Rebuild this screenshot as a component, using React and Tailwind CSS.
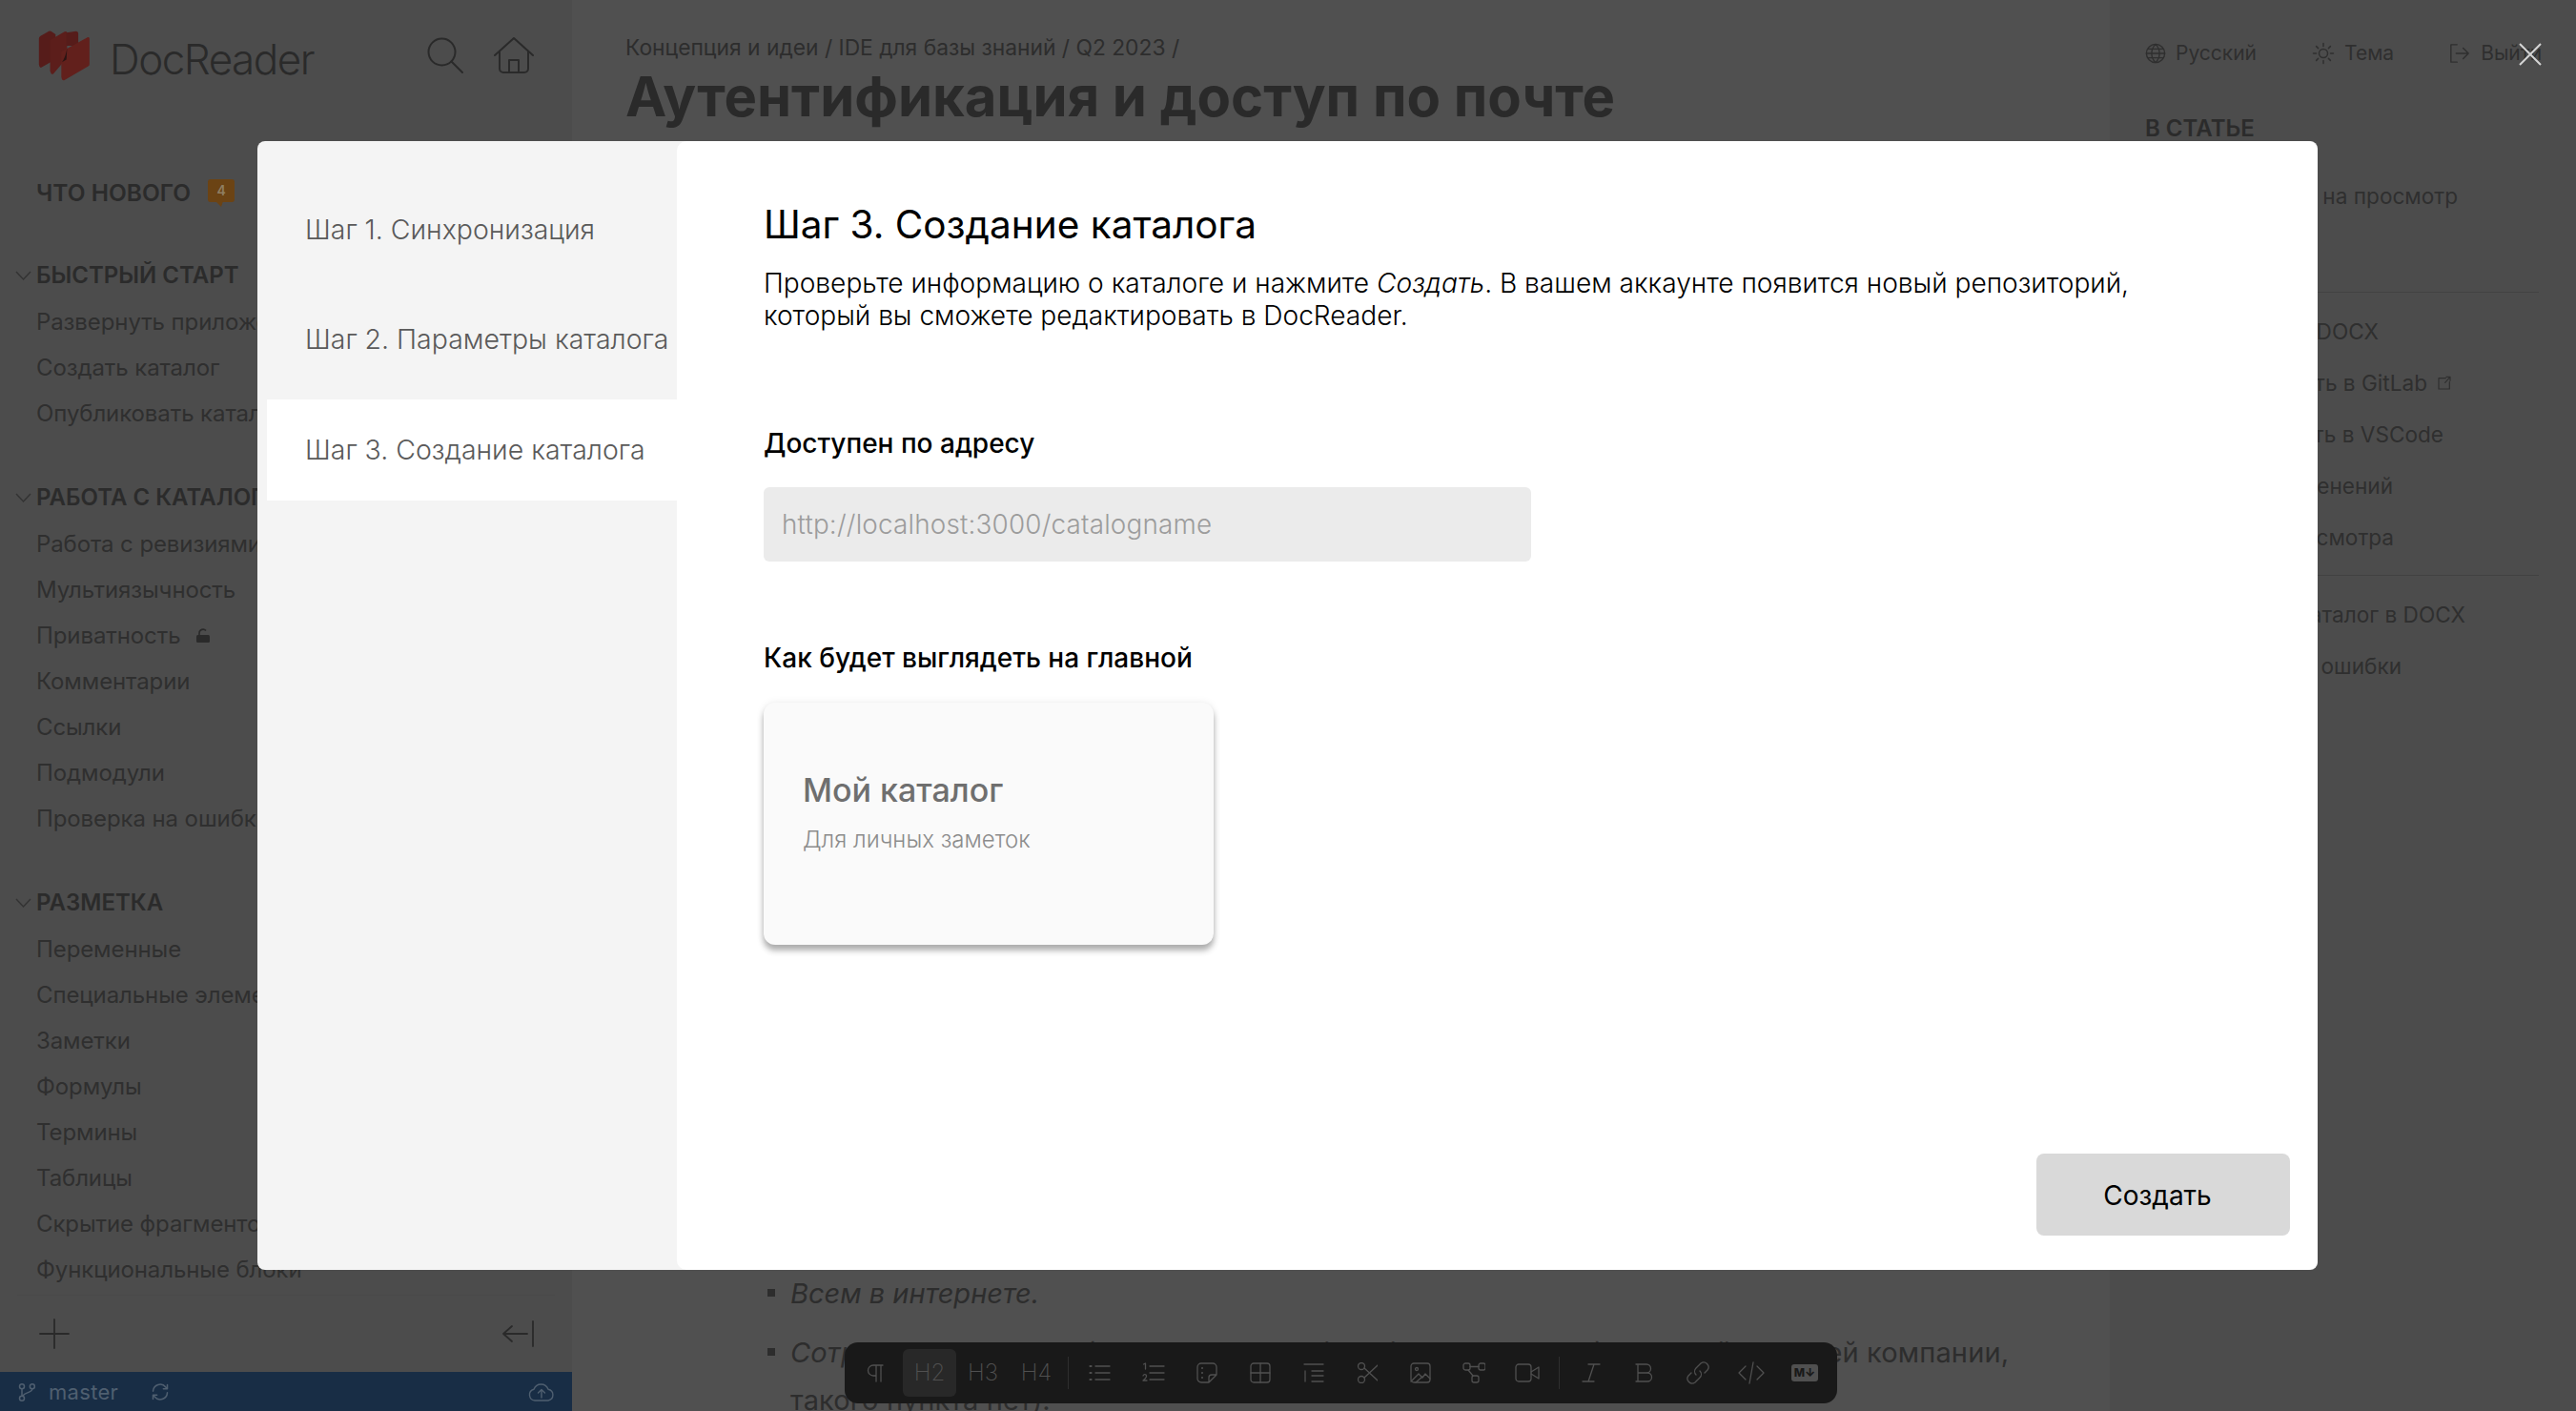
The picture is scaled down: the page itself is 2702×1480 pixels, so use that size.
import React from 'react';

const quickStart = ['Развернуть приложение', 'Создать каталог', 'Опубликовать каталог'];
const catalogWork = ['Работа с ревизиями', 'Мультиязычность', 'Приватность', 'Комментарии', 'Ссылки', 'Подмодули', 'Проверка на ошибки'];
const markup = ['Переменные', 'Специальные элементы', 'Заметки', 'Формулы', 'Термины', 'Таблицы', 'Скрытие фрагментов', 'Функциональные блоки'];

const Icon = ({ size = 24, w, h, view = '0 0 24 24', width = 1.3, className = '', children }) => (
    <svg width={w || size} height={h || size} viewBox={view} fill="none" stroke="currentColor" strokeWidth={width} strokeLinecap="round" strokeLinejoin="round" className={`shrink-0 ${className}`}>
        {children}
    </svg>
);

const NavSection = ({ title, items, className = '' }) => (
    <div className={className}>
        <div className="relative h-[30px] pl-[38px] text-[24px] leading-[30px] font-semibold text-[#2b2b2b] whitespace-nowrap">
            <svg className="absolute left-[16px] top-[10px]" width="17" height="11" viewBox="0 0 17 11" fill="none" stroke="#333" strokeWidth="1.4"><path d="M1 1l7.500 8 7.500-8" /></svg>
            {title}
        </div>
        <ul className="mt-[20px] flex flex-col">
            {items.map((item) => (
                <li key={item} className="h-[48px] pl-[38px] text-[24px] leading-[28px] tracking-[-0.1px] text-[#2f2f2f] whitespace-nowrap flex items-start gap-[16px]">
                    {item}
                    {item === 'Приватность' && <svg className="mt-[6px]" width="16" height="16" viewBox="0 0 16 16" fill="#2a2a2a"><rect x="1" y="7" width="14" height="8" rx="1.500" /><path d="M4 7V5a4 4 0 017-2.500" fill="none" stroke="#2a2a2a" strokeWidth="1.600" /></svg>}
                </li>
            ))}
        </ul>
    </div>
);

const Logo = () => (
    <svg width="54" height="53" viewBox="0 0 160 158" className="shrink-0">
        <path d="M2 25q0-5 5-8l26-15q5-2 9 2l12 8v78L8 116q-6-3-6-10z" fill="#561c1a" />
        <path d="M37 30L82 4q6-3 8 3v78L47 136q-5 2-7-2l-3-8z" fill="#5c1e1b" />
        <path d="M88 7l30-5q6 0 7 6v40H88z" fill="#561c1a" />
        <path d="M72 66l83-45q5-2 5 4v80q0 5-4 7L82 155q-6 3-8-3l-2-7z" fill="#62201c" />
        <path d="M90 55q-5 30-16 44l14-8z" fill="#2a1413" />
    </svg>
);

const Sidebar = () => (
    <aside className="w-[600px] h-full shrink-0 flex flex-col bg-[#4c4c4c]">
        <div className="h-[116px] shrink-0 flex items-start pl-[40px] pt-[32px] text-[#2a2a2a]">
            <Logo />
            <span className="ml-[21px] mt-[4px] text-[44px] leading-[52px] font-light tracking-[-1.500px] text-[#2a2a2a]">DocReader</span>
            <Icon size={38} view="0 0 38 38" width={2} className="ml-[119px] mt-[7px]"><circle cx="15.500" cy="15.500" r="14" /><path d="M25.500 25.500L37 37" /></Icon>
            <Icon w={42} h={38} view="0 0 42 38" width={2} className="ml-[32px] mt-[7px]"><path d="M1 19L21 1l20 18" /><path d="M6 15v18a4 4 0 004 4h22a4 4 0 004-4V15" /><path d="M16 37V24h10v13" /></Icon>
        </div>
        <div className="mt-[71px] h-[30px] shrink-0 pl-[38px] flex items-center gap-[18px] text-[24.500px] font-semibold text-[#2b2b2b]">
            ЧТО НОВОГО
            <span className="relative w-[28px] h-[24px] -translate-y-[2px] rounded-[3px] bg-[#6b4314] text-[14px] leading-[24px] text-center font-semibold text-[#8f7e62]">
                4
                <i className="absolute left-[8px] top-[23px] border-t-[6px] border-l-[6px] border-r-[2px] border-t-[#6b4314] border-l-transparent border-r-transparent" />
            </span>
        </div>
        <div className="flex-1 min-h-0 mt-[57px] overflow-hidden">
            <NavSection title="БЫСТРЫЙ СТАРТ" items={quickStart} />
            <NavSection title="РАБОТА С КАТАЛОГОМ" items={catalogWork} className="mt-[39px]" />
            <NavSection title="РАЗМЕТКА" items={markup} className="mt-[39px]" />
        </div>
        <div className="h-[81px] shrink-0 mx-[18px] border-t border-[#494949] flex items-center justify-between pl-[23px] pr-[22px] text-[#2a2a2a]">
            <Icon size={32} view="0 0 32 32" width={1.8}><path d="M16 1v30M1 16h30" /></Icon>
            <Icon w={34} h={28} view="0 0 34 28" width={1.8}><path d="M33 1v26M27 14H2M11 6l-9 8 9 8" /></Icon>
        </div>
        <div className="h-[41px] shrink-0 flex items-center bg-[#182d45] pl-[18px] pr-[18px] text-[#4f5f70]">
            <Icon size={20} width={1.800}><circle cx="6" cy="5" r="3" /><circle cx="6" cy="20" r="3" /><circle cx="19" cy="5" r="3" /><path d="M6 8v9M19 8c0 5-9 4-12 9" /></Icon>
            <span className="ml-[13px] text-[22px] leading-[26px] tracking-[0.3px]">master</span>
            <Icon size={20} width={1.800} className="ml-[34px]"><path d="M3 11a9 9 0 0 1 16-5l2 2M21 3v5h-5M21 13a9 9 0 0 1-16 5l-2-2M3 21v-5h5" /></Icon>
            <Icon w={28} h={20} view="0 0 28 20" width={1.400} className="ml-auto"><path d="M7 19a6 6 0 0 1-1-11.800 8 8 0 0 1 15 0A6 6 0 0 1 21 19zM14 16V8M10.500 11L14 7.500l3.500 3.500" /></Icon>
        </div>
    </aside>
);

const Article = () => (
    <main className="flex-1 min-w-0 bg-[#505050] pl-[56px] pt-[35px]">
        <div className="text-[22.800px] leading-[30px] text-[#2d2d2d] whitespace-nowrap">Концепция и идеи / IDE для базы знаний / Q2 2023 /</div>
        <h1 className="mt-[2px] text-[58px] leading-[68px] font-bold text-[#2a2a2a] whitespace-nowrap">Аутентификация и доступ по почте</h1>
        <ul className="mt-[1197px] ml-[173px] text-[29px] leading-[50px] text-[#2d2d2d]">
            <li className="relative italic mb-[12px]">
                <i className="absolute left-[-24px] top-[20px] w-[8px] h-[8px] bg-[#2d2d2d]" />
                Всем в интернете.
            </li>
            <li className="relative whitespace-nowrap tracking-[0.14px]">
                <i className="absolute left-[-24px] top-[20px] w-[8px] h-[8px] bg-[#2d2d2d]" />
                <em>Сотрудникам</em> ISO ИТ (через домен Active Directory или BD) и партнёрам всей компании,<br />такого пункта нет).
            </li>
        </ul>
    </main>
);

const tocRows = [
    { text: 'Отправить на просмотр', pad: 'pr-[85px]', top: 'mt-[41px]' },
    { text: 'Скачать DOCX', pad: 'pr-[168px]', top: 'mt-[112px]' },
    { text: 'Редактировать в GitLab', pad: 'pr-[91px]', link: true, top: 'mt-[24px]' },
    { text: 'Редактировать в VSCode', pad: 'pr-[100px]', top: 'mt-[24px]' },
    { text: 'История изменений', pad: 'pr-[153px]', top: 'mt-[24px]' },
    { text: 'Ссылка для просмотра', pad: 'pr-[152px]', top: 'mt-[24px]' },
    { text: 'Скачать каталог в DOCX', pad: 'pr-[77px]', top: 'mt-[51px]' },
    { text: 'Найти ошибки', pad: 'pr-[144px]', top: 'mt-[24px]' },
];

const RightColumn = () => (
    <aside className="relative w-[489px] h-full shrink-0 bg-[#4c4c4c] pl-[37px] pt-[42px] text-[#2f2f2f]">
        <div className="flex items-center text-[21px] leading-[28px] whitespace-nowrap">
            <Icon size={22} width={1.500}><circle cx="12" cy="12" r="10.500" /><path d="M1.500 12h21M12 1.500c-6 6-6 15 0 21M12 1.500c6 6 6 15 0 21M3 7h18M3 17h18" /></Icon>
            <span className="ml-[10px]">Русский</span>
            <Icon size={24} width={1.500} className="ml-[58px]"><circle cx="12" cy="12" r="4.500" /><path d="M12 1.500v3M12 19.500v3M1.500 12h3M19.500 12h3M4.600 4.600l2 2M17.400 17.400l2 2M4.600 19.400l2-2M17.400 6.600l2-2" /></Icon>
            <span className="ml-[10px]">Тема</span>
            <Icon size={22} width={1.500} className="ml-[58px]"><path d="M9 2H2v20h7M8 12h14M16 6l6 6-6 6" /></Icon>
            <span className="ml-[11px]">Выйти</span>
        </div>
        <div className="mt-[50px] text-[24px] leading-[30px] font-semibold text-[#2b2b2b]">В СТАТЬЕ</div>
        <div className="w-[413px] flex flex-col">
            {tocRows.map((row) => (
                <div key={row.text} className={`${row.top} ${row.pad} h-[30px] text-[22.600px] leading-[30px] whitespace-nowrap flex items-center justify-end gap-[10px]`}>
                    {row.text}
                    {row.link && <Icon size={16} width={1.800}><path d="M14 4H3v17h17V10M13 11l8-9M15 2h6v6" /></Icon>}
                </div>
            ))}
        </div>
        <div className="absolute left-[37px] w-[413px] top-[306px] h-px bg-[#424242]" />
        <div className="absolute left-[37px] w-[413px] top-[603px] h-px bg-[#424242]" />
    </aside>
);

const Wizard = () => (
    <div className="absolute left-[270px] top-[148px] w-[2161px] h-[1184px] rounded-[8px] bg-[#f4f4f4] flex overflow-hidden">
        <nav className="w-[440px] shrink-0 pl-[10px] pt-[40px] text-[28.450px] font-light text-[#5a5a5a] flex flex-col gap-[9.500px]">
            {['Шаг 1. Синхронизация', 'Шаг 2. Параметры каталога', 'Шаг 3. Создание каталога'].map((step, i) => (
                <div key={step} className={`h-[106px] flex items-center pl-[40px] whitespace-nowrap ${i === 2 ? 'bg-white' : ''}`}>{step}</div>
            ))}
        </nav>
        <section className="flex-1 min-w-0 bg-white rounded-[10px] flex flex-col pl-[91px] pr-[29px] pt-[64px] pb-[36px]">
            <h2 className="text-[40.500px] leading-[48px] font-normal text-black whitespace-nowrap">Шаг 3. Создание каталога</h2>
            <p className="mt-[20px] w-[1480px] text-[28.100px] leading-[34px] font-light text-black">
                Проверьте информацию о каталоге и нажмите <em>Создать</em>. В вашем аккаунте появится новый репозиторий, который вы сможете редактировать в DocReader.
            </p>
            <label className="mt-[100px] text-[28px] leading-[34px] font-[450] text-black">Доступен по адресу</label>
            <div className="mt-[29px] w-[805px] h-[78px] rounded-[6px] bg-[#ebebeb] pl-[19px] pt-[2px] flex items-center text-[27.800px] font-light text-[#9c9c9c] tracking-[0.2px]">http://localhost:3000/catalogname</div>
            <label className="mt-[84px] text-[28px] leading-[34px] font-[450] text-black">Как будет выглядеть на главной</label>
            <div className="mt-[30px] w-[472px] h-[254px] rounded-[12px] bg-[#fafafa] pl-[41px] pb-[24px] flex flex-col justify-center shadow-[0_6px_6px_rgba(0,0,0,0.3),0_0_8px_rgba(0,0,0,0.08)]">
                <div className="text-[34px] leading-[42px] font-[450] text-[#6f6f6f]">Мой каталог</div>
                <div className="mt-[16px] text-[24px] leading-[30px] font-light text-[#8c8c8c]">Для личных заметок</div>
            </div>
            <div className="mt-auto flex justify-end">
                <button className="w-[266px] h-[86px] pr-[12px] pt-[2px] rounded-[8px] bg-[#d9d9d9] text-[28px] text-black">Создать</button>
            </div>
        </section>
    </div>
);

const ToolSlot = ({ children, className = '' }) => (
    <span className={`w-[56px] shrink-0 flex items-center justify-center ${className}`}>{children}</span>
);

const Toolbar = () => (
    <div className="absolute left-[886px] top-[1408px] w-[1041px] h-[64px] rounded-[14px] bg-[#191919] flex items-center pl-[5px] text-[#505050]">
        <ToolSlot><Icon size={20} view="0 0 20 20"><path d="M17 2H7a5 5 0 000 11h3M10 2v17M15 2v17" /></Icon></ToolSlot>
        <ToolSlot className="h-[50px] rounded-[6px] bg-[#282828] text-[24px] font-extralight">H2</ToolSlot>
        <ToolSlot className="text-[24px] font-extralight">H3</ToolSlot>
        <ToolSlot className="text-[24px] font-extralight">H4</ToolSlot>
        <i className="mx-[5px] w-px h-[34px] bg-[#2e2e2e]" />
        <ToolSlot><Icon view="0 0 24 24"><path d="M7 5h15M7 12h15M7 19h15" /><path d="M1.500 5h1M1.500 12h1M1.500 19h1" strokeWidth="2.200" /></Icon></ToolSlot>
        <ToolSlot><Icon view="0 0 24 24"><path d="M8 5h15M8 12h15M8 19h15M1.500 3l2-1v6M1 15q1-2 3-1 2 2-3 6h4" /></Icon></ToolSlot>
        <ToolSlot><Icon size={22} view="0 0 22 22"><path d="M13 21H5a4 4 0 01-4-4V5a4 4 0 014-4h12a4 4 0 014 4v8zM13 21v-5a3 3 0 013-3h5" /><path d="M6 6v0M6 11v0M6 16v0" strokeWidth="2" /></Icon></ToolSlot>
        <ToolSlot><Icon size={22} view="0 0 22 22"><rect x="1" y="1" width="20" height="20" rx="3" /><path d="M11 1v20M1 11h20" /></Icon></ToolSlot>
        <ToolSlot><Icon size={22} view="0 0 22 22"><path d="M1 2h20M9 9h12M9 14h12M9 20h12M2 9v11" /></Icon></ToolSlot>
        <ToolSlot><Icon size={22} view="0 0 22 22"><circle cx="5" cy="4" r="3.500" /><circle cx="5" cy="18" r="3.500" /><path d="M8 6l14 13M8 16L22 3" /></Icon></ToolSlot>
        <ToolSlot><Icon size={22} view="0 0 22 22"><rect x="1" y="1" width="20" height="20" rx="3" /><circle cx="7" cy="7" r="1.500" /><path d="M1 20l8-8 4 4 3-4 5 5M6 21l7-6" /></Icon></ToolSlot>
        <ToolSlot><Icon size={24} view="0 0 24 24"><rect x="1" y="2" width="7" height="7" rx="2" /><rect x="17" y="2" width="7" height="7" rx="2" /><rect x="10" y="15" width="7" height="7" rx="2" /><path d="M8 5.500h9M6 9l5 6" /></Icon></ToolSlot>
        <ToolSlot><Icon w={26} h={20} view="0 0 26 20"><rect x="1" y="1" width="16" height="18" rx="3" /><path d="M17 9l8-5v12l-8-5" /></Icon></ToolSlot>
        <i className="mx-[5px] w-px h-[34px] bg-[#2e2e2e]" />
        <ToolSlot><Icon size={20} view="0 0 20 20"><path d="M7 1h12M1 19h12M13 1L7 19" /></Icon></ToolSlot>
        <ToolSlot><Icon size={20} view="0 0 20 20"><path d="M3 1h9a4.500 4.500 0 010 9H3zM3 10h10a4.500 4.500 0 010 9H3zM1 1h2M1 19h2" /></Icon></ToolSlot>
        <ToolSlot><Icon size={26} view="0 0 26 26"><path d="M11 15a5 5 0 010-7l5-5a5 5 0 017 7l-3 3M15 11a5 5 0 010 7l-5 5a5 5 0 01-7-7l3-3" /></Icon></ToolSlot>
        <ToolSlot><Icon size={28} view="0 0 28 28"><path d="M8 7l-7 7 7 7M20 7l7 7-7 7M16 3l-4 22" /></Icon></ToolSlot>
        <ToolSlot>
            <span className="w-[28px] h-[18px] rounded-[3px] bg-[#505050] text-[12px] leading-[18px] text-center font-extrabold text-[#191919]">M↓</span>
        </ToolSlot>
    </div>
);

export default function App() {
    return (
        <div className="relative w-[2702px] h-[1480px] overflow-hidden bg-[#4f4f4f] font-['Inter',sans-serif]">
            <div className="flex h-full">
                <Sidebar />
                <Article />
                <RightColumn />
            </div>
            <Wizard />
            <Toolbar />
            <svg className="absolute left-[2642px] top-[45px]" width="24" height="24" viewBox="0 0 24 24" stroke="#d4d4d4" strokeWidth="2"><path d="M1 1l22 22M23 1L1 23" /></svg>
        </div>
    );
}
